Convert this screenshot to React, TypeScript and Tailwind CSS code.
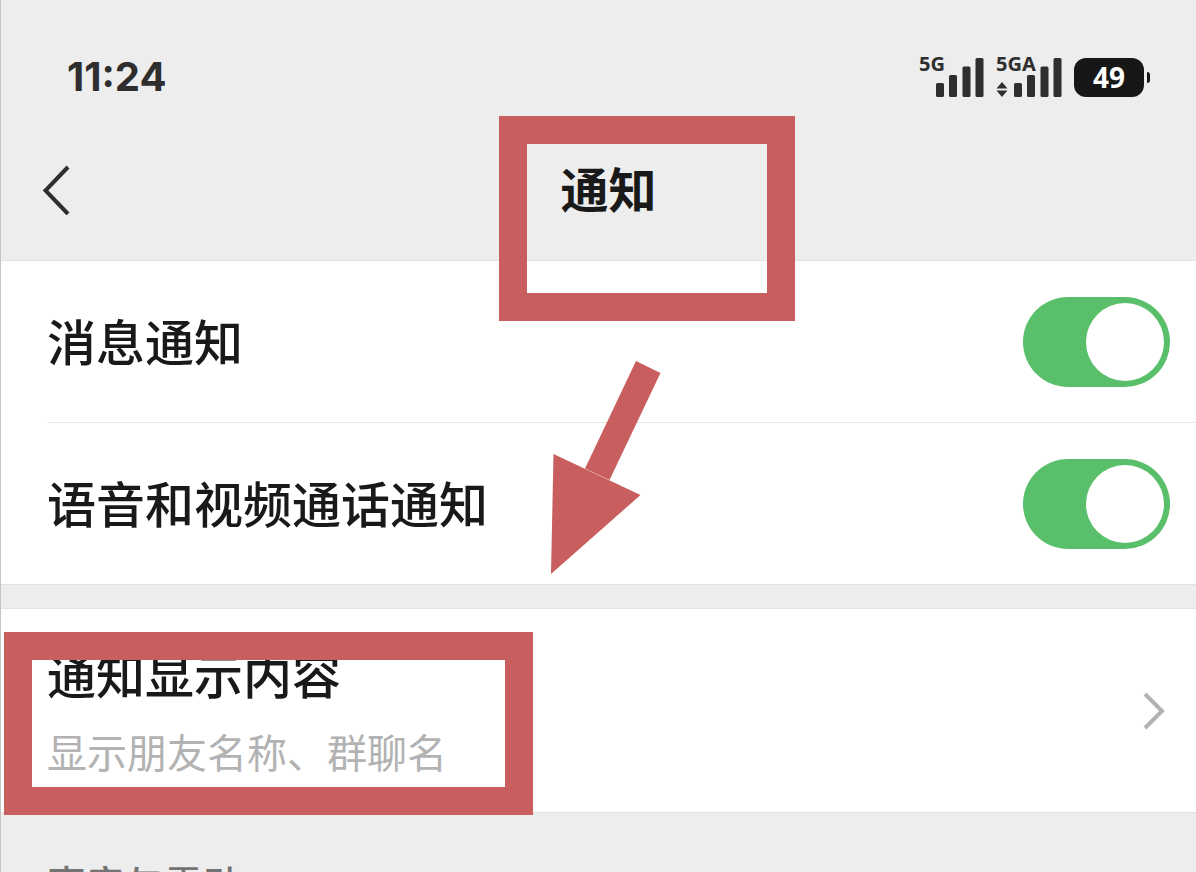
import { useState } from 'react'

type SwitchRowProps = {
  id: string
  label: string
  divider?: boolean
}

const SwitchRow = ({ id, label, divider }: SwitchRowProps) => {
  const [on, setOn] = useState(true)
  return (
    <div className={`ml-[46px] ${divider ? 'border-b border-[#e6e6e6]' : ''}`}>
      <div className="flex h-[161px] items-center justify-between pr-[26px]">
        <label htmlFor={id} className="text-[49px] leading-[60px] font-medium">
          {label}
        </label>
        <input
          id={id}
          type="checkbox"
          role="switch"
          checked={on}
          onChange={() => setOn(!on)}
          className="flex h-[90px] w-[147px] shrink-0 cursor-pointer appearance-none items-center rounded-full bg-[#d5d5d5] px-[6px] before:size-[78px] before:rounded-full before:bg-white before:content-[''] checked:justify-end checked:bg-[#59bf6b]"
        />
      </div>
    </div>
  )
}

const SignalBars = () => (
  <svg className="h-[39px] w-[48px]" viewBox="0 0 48 39" fill="#2e2e2e">
    <rect x="0" y="25" width="8" height="14" rx="1.5" />
    <rect x="13" y="17" width="8" height="22" rx="1.5" />
    <rect x="26.5" y="8.5" width="8" height="30.500" rx="1.5" />
    <rect x="39.500" y="0" width="8" height="39" rx="1.5" />
  </svg>
)

const StatusBar = () => (
  <div className="flex h-[120px] items-center justify-between pt-[34px] pr-[46px] pl-[66px] text-[#2e2e2e]">
    <div className="font-['Inter',sans-serif] text-[40px] leading-[48px] font-bold">11:24</div>
    <div className="flex items-center gap-3">
      <div className="relative flex w-[65px] justify-end">
        <span className="absolute -top-1 left-0 text-[20px] leading-[20px] font-bold">5G</span>
        <SignalBars />
      </div>
      <div className="relative flex w-[66px] items-end justify-between">
        <span className="absolute -top-1 left-0 text-[20px] leading-[20px] font-bold">5GA</span>
        <svg className="h-[15px] w-[12px]" viewBox="0 0 12 15" fill="#2e2e2e">
          <path d="M6 0 11.5 6.5H.5ZM6 15 .5 8.5h11Z" />
        </svg>
        <SignalBars />
      </div>
      <div className="flex items-center gap-[3px]">
        <div className="flex h-[39px] w-[70px] items-center justify-center rounded-xl bg-[#171717] text-[28px] leading-[36px] font-bold text-white">
          49
        </div>
        <div className="h-[11px] w-[3px] rounded-r-full bg-[#171717]" />
      </div>
    </div>
  </div>
)

const App = () => {
  return (
    <div className="relative h-screen w-full overflow-hidden border-l border-[#c4c4c4] bg-[#ededed] font-['Noto_Sans','Noto_Sans_CJK_SC',sans-serif] text-[#191919]">
      <StatusBar />

      <header className="grid h-[141px] grid-cols-[1fr_auto_1fr] items-center border-b border-[#e2e2e2] pr-[21px] pl-[41px]">
        <button aria-label="返回" className="w-[30px] cursor-pointer">
          <svg className="h-[50px] w-[30px]" viewBox="0 0 30 50" fill="none" stroke="#2e2e2e" strokeWidth="4">
            <path d="M26 2 3.500 25.500 26 49" />
          </svg>
        </button>
        <h1 className="text-[48px] leading-[60px] font-bold">通知</h1>
      </header>

      <main>
        <section className="border-b border-[#e2e2e2] bg-white">
          <SwitchRow id="message" label="消息通知" divider />
          <SwitchRow id="call" label="语音和视频通话通知" />
        </section>

        <a
          href="#content"
          className="mt-[23px] flex h-[205px] items-center justify-between border-y border-[#e2e2e2] bg-white pr-[31px] pl-[46px]"
        >
          <div className="flex flex-col gap-6">
            <div className="text-[49px] leading-[60px] font-medium">通知显示内容</div>
            <div className="text-[40px] leading-[48px] text-[#b2b2b2]">显示朋友名称、群聊名</div>
          </div>
          <svg className="h-[38px] w-[22px]" viewBox="0 0 22 38" fill="none" stroke="#b2b2b2" strokeWidth="4">
            <path d="M2 2l17 17L2 36" />
          </svg>
        </a>

        <h2 className="pt-[47px] pl-[46px] text-[39px] leading-[48px] font-medium text-[#737373]">声音与震动</h2>
      </main>

      {/* hand-drawn marks over the screen */}
      <div className="pointer-events-none absolute top-[116px] left-[498px] h-[205px] w-[296px] border-[28px] border-[#c95e5e]" />
      <div className="pointer-events-none absolute top-[632px] left-[3px] h-[183px] w-[529px] border-[28px] border-[#c95e5e]" />
      <svg
        className="pointer-events-none absolute top-[360px] left-[549px] h-[215px] w-[112px]"
        viewBox="0 0 112 215"
        fill="#c95e5e"
      >
        <path d="M86 1l24.500 12-51 107-24.500-11.500Z" />
        <path d="M3.500 94 90.500 135 1 214Z" />
      </svg>
    </div>
  )
}

export default App
